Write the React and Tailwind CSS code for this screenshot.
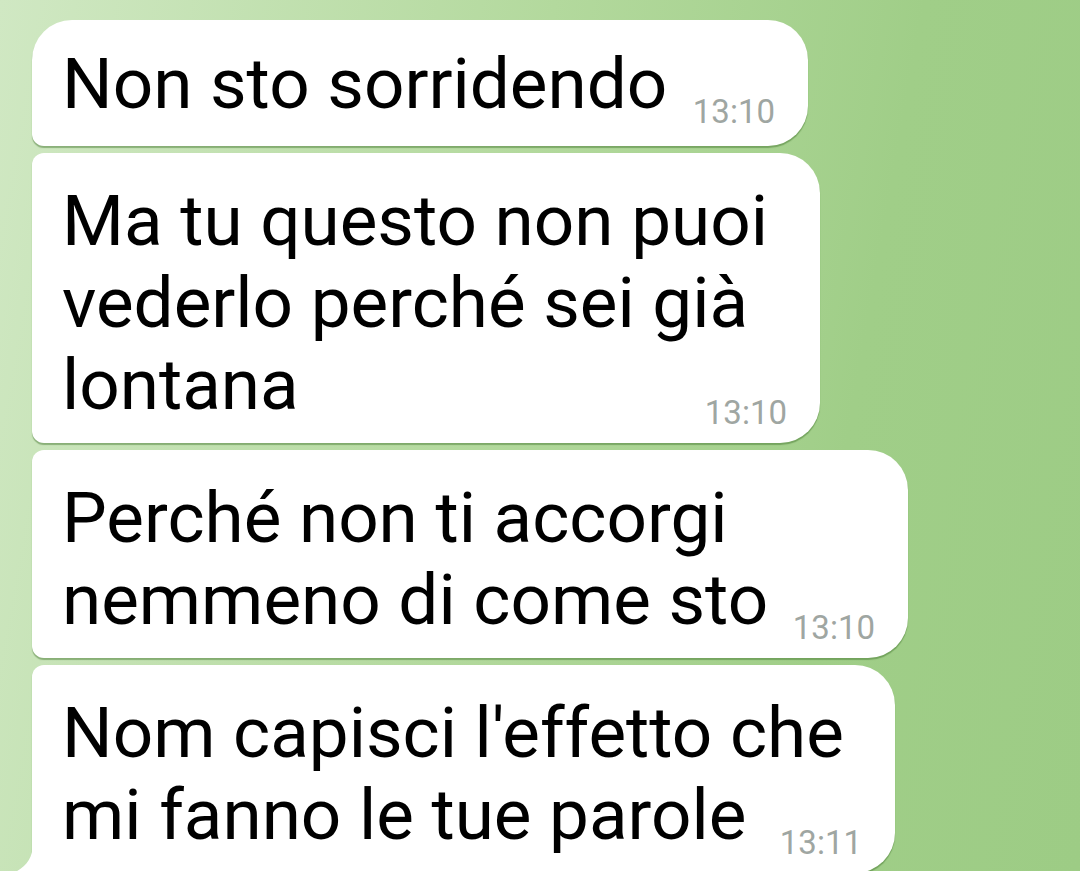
import React from "react";

const messages = [
  {
    lines: ["Non sto sorridendo"],
    time: "13:10",
    width: "w-[776px]",
    shape: "rounded-tl-[40px] rounded-bl-[12px] rounded-r-[40px] pt-[23px] pb-[21px]",
  },
  {
    lines: ["Ma tu questo non puoi", "vederlo perché sei già", "lontana"],
    time: "13:10",
    width: "w-[788px]",
    shape: "rounded-l-[12px] rounded-r-[40px] pt-[27px] pb-[17px]",
  },
  {
    lines: ["Perché non ti accorgi", "nemmeno di come sto"],
    time: "13:10",
    width: "w-[876px]",
    shape: "rounded-l-[12px] rounded-r-[40px] pt-[27px] pb-[17px]",
  },
  {
    lines: ["Nom capisci l'effetto che", "mi fanno le tue parole"],
    time: "13:11",
    width: "w-[863px]",
    shape: "rounded-tl-[12px] rounded-r-[40px] pt-[27px] pb-[17px]",
    tail: true,
  },
];

function Bubble({ lines, time, width, shape, tail }) {
  const first = lines.slice(0, -1);
  const last = lines[lines.length - 1];
  return (
    <div
      className={`relative bg-white ${width} ${shape} pl-[30px] pr-[33px] shadow-[0_2px_1px_rgba(60,110,40,0.45)]`}
    >
      {first.map((l) => (
        <div key={l} className="whitespace-nowrap">
          {l}
        </div>
      ))}
      <div className="flex items-end justify-between">
        <span className="whitespace-nowrap">{last}</span>
        <span className="text-[33px] leading-[32px] text-[#9fa6a2] mb-[-3px] ml-[24px]">
          {time}
        </span>
      </div>
      {tail && (
        <svg
          className="absolute left-[-19px] bottom-0"
          width="20"
          height="30"
          viewBox="0 0 20 30"
        >
          <path d="M20 0 C20 16 12 25 0 30 L20 30 Z" fill="#ffffff" />
        </svg>
      )}
    </div>
  );
}

export default function App() {
  return (
    <div
      className="h-[871px] w-full overflow-hidden bg-[linear-gradient(100deg,#d0e8c3_0%,#b3d99d_45%,#a0ce88_75%,#9dcc85_100%)] pt-[20px] pl-[32px] flex flex-col gap-[7px] text-black text-[71px] leading-[82px]"
      style={{ fontFamily: "Roboto, 'Noto Sans', sans-serif" }}
    >
      {messages.map((m, i) => (
        <Bubble key={i} {...m} />
      ))}
    </div>
  );
}
